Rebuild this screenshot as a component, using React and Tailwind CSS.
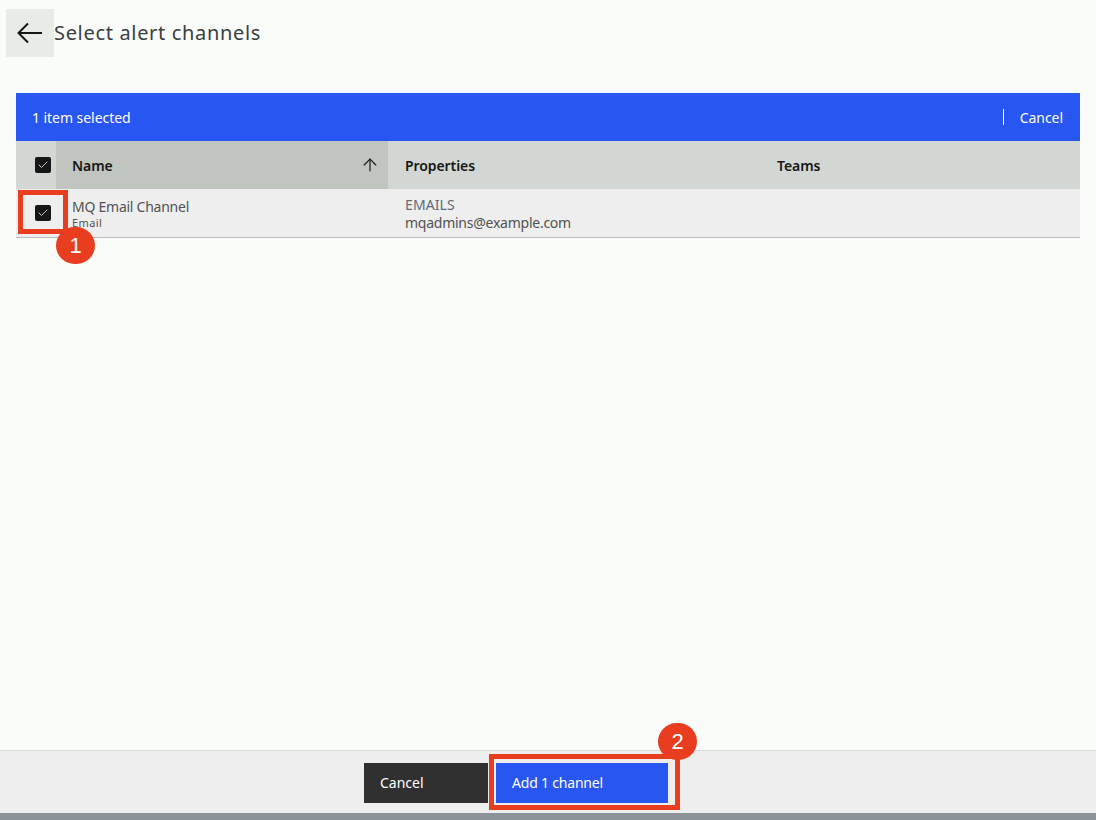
import React from 'react';
import { ArrowUp, Check } from 'lucide-react';

const font = 'font-["Noto_Sans",sans-serif]';

const Checkbox = () => (
  <div className="w-4 h-4 shrink-0 rounded-[2px] bg-[#161616] flex items-center justify-center">
    <Check className="w-3 h-3 text-white" strokeWidth={1.5} />
  </div>
);

const Marker = ({ className, children }) => (
  <div className={`absolute w-[39px] h-[37px] rounded-full bg-[#e83e1f] flex items-center justify-center text-white text-[22px] font-['Liberation_Sans',sans-serif] ${className}`}>
    {children}
  </div>
);

const App = () => {
  return (
    <div className={`relative h-[820px] w-[1096px] overflow-hidden flex flex-col bg-[#fafcfa] ${font}`}>
      {/* Header */}
      <div className="flex items-center pl-[6px] pt-[9px]">
        <button className="w-12 h-12 bg-[#e7ece6] flex items-center justify-center text-[#161616]">
          <svg width="48" height="48" viewBox="0 0 48 48" fill="none" stroke="currentColor" strokeWidth="2">
            <path d="M36 24H13" />
            <path d="M22 14.5 12.5 24 22 33.5" />
          </svg>
        </button>
        <h1 className="text-[20px] text-[#39403f] tracking-[0.67px]">Select alert channels</h1>
      </div>

      {/* Table */}
      <div className="mx-4 mt-9 flex-1">
        <div className="h-12 bg-[#2856f2] flex items-center justify-between pl-4 pr-[17px] text-white text-[14px] tracking-[-0.05px]">
          <span>1 item selected</span>
          <div className="flex items-center">
            <div className="w-px h-4 bg-white mr-4" />
            <span>Cancel</span>
          </div>
        </div>

        <div className="h-12 bg-[#d2d7d3] flex items-center text-[14px] font-semibold text-[#161616] tracking-[-0.08px]">
          <div className="w-10 shrink-0 pl-[19px]">
            <Checkbox />
          </div>
          <div className="w-[332px] h-full bg-[#c0c6bf] flex items-center justify-between pl-4 pr-2">
            <span>Name</span>
            <ArrowUp className="w-5 h-5" strokeWidth={1.4} />
          </div>
          <div className="w-[389px] pl-[17px]">Properties</div>
          <div>Teams</div>
        </div>

        <div className="h-[49px] bg-[#eeeeee] border-b border-[#bcbcbc] flex items-center">
          <div className="w-10 shrink-0 pl-[19px]">
            <Checkbox />
          </div>
          <div className="w-[332px] pl-4 pt-[2px] leading-none">
            <div className="text-[14px] text-[#525252] leading-[18px] tracking-[-0.25px]">MQ Email Channel</div>
            <div className="text-[11px] text-[#525252] leading-[14px] tracking-[0.4px]">Email</div>
          </div>
          <div className="pl-[17px] pt-[2px] text-[14px]">
            <div className="text-[#5e6b7a] leading-[18px] tracking-[0.1px]">EMAILS</div>
            <div className="text-[#525252] leading-[18px] tracking-[-0.25px]">mqadmins@example.com</div>
          </div>
        </div>
      </div>

      {/* Footer */}
      <div className="h-[63px] bg-[#eeeeee] border-t border-[#d5dad6] flex justify-start pl-[364px] pt-3">
        <button className="w-[124px] h-10 pb-[2px] bg-[#303030] text-white text-[14px] text-left pl-4">Cancel</button>
        <button className="w-[172px] h-10 pb-[2px] ml-2 bg-[#2856f2] text-white text-[14px] text-left pl-4 tracking-[-0.2px]">Add 1 channel</button>
      </div>
      <div className="h-[7px] bg-[#8d9499]" />

      {/* Annotations */}
      <div className="absolute left-[18px] top-[190px] w-[50px] h-[44px] border-[5px] border-[#e83e1f]" />
      <Marker className="left-[56px] top-[227px]">1</Marker>
      <div className="absolute left-[489px] top-[754px] w-[191px] h-[56px] border-[5px] border-[#e83e1f]" />
      <Marker className="left-[658px] top-[723px]">2</Marker>
    </div>
  );
};

export default App;
